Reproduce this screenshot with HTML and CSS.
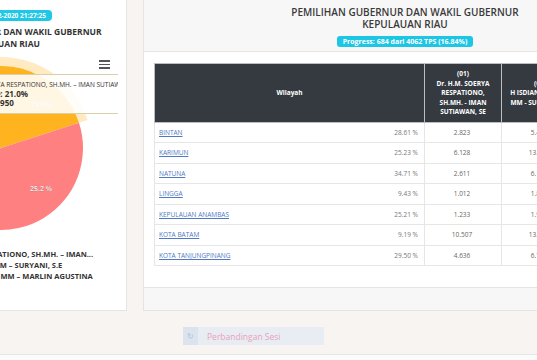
FILE: index.html
```html
<!DOCTYPE html>
<html lang="id">
<head>
    <meta charset="UTF-8">
    <title>Rekap Pilgub Kepri</title>
    <link rel="stylesheet" href="styles.css">
</head>
<body>
<div class="page">
    <div class="row">
        <!-- kartu grafik -->
        <div class="card card-chart">
            <div class="chart-head">
                <span class="badge">Update 10-12-2020 21:27:25</span>
                <div class="chart-title">PEMILIHAN GUBERNUR DAN WAKIL GUBERNUR<br>KEPULAUAN RIAU</div>
            </div>
            <div class="chart-box">
                <div class="menu-btn"><i></i><i></i><i></i></div>
                <svg class="pie" width="247" height="190" viewBox="0 0 247 190">
                    <path d="M122 96 L64.02 153.98 A82 82 0 0 1 81 24.99 Z" fill="#7cb5ec"/>
                    <path d="M76.5 17.19 A91 91 0 0 1 208.55 67.88 L199.99 70.66 A82 82 0 0 0 81 24.99 Z" fill="#ffb41f" opacity="0.28"/>
                    <path d="M122 96 L81 24.99 A82 82 0 0 1 199.99 70.66 Z" fill="#ffb41f"/>
                    <path d="M122 96 L199.99 70.66 A82 82 0 0 1 64.02 153.98 Z" fill="#ff8080"/>
                    <text x="152" y="55" class="pie-label">21.0 %</text>
                    <text x="151" y="139" class="pie-label">25.2 %</text>
                </svg>
                <div class="tooltip">
                    <div class="tip-name">Dr. H.M. SOERYA RESPATIONO, SH.MH. – IMAN SUTIAWAN, SE</div>
                    <div class="tip-val">Persentase: 21.0%</div>
                    <div class="tip-val">Jumlah: 12.950</div>
                </div>
            </div>
            <ul class="legend">
                <li><span class="dot dot-1"></span>Dr.H.M. SOERYA RESPATIONO, SH.MH. – IMAN...</li>
                <li><span class="dot dot-2"></span>H. ISDIANTO, S.SOS, MM – SURYANI, S.E</li>
                <li><span class="dot dot-3"></span>H. ANSAR AHMAD, SE, MM – MARLIN AGUSTINA</li>
            </ul>
        </div>

        <!-- kartu tabel -->
        <div class="card card-table">
            <div class="card-header">
                <div class="title">PEMILIHAN GUBERNUR DAN WAKIL GUBERNUR<br>KEPULAUAN RIAU</div>
                <span class="progress">Progress: 684 dari 4062 TPS (16.84%)</span>
            </div>
            <div class="card-body">
                <table class="rekap">
                    <colgroup>
                        <col class="c-wil"><col class="c-num"><col class="c-num"><col class="c-num">
                    </colgroup>
                    <thead>
                        <tr>
                            <th>Wilayah</th>
                            <th>(01)<br>Dr. H.M. SOERYA<br>RESPATIONO,<br>SH.MH. - IMAN<br>SUTIAWAN, SE</th>
                            <th>(02)<br>H ISDIANTO, S.Sos,<br>MM - SURYANI, S.E</th>
                            <th>(03)<br>H. ANSAR AHMAD,<br>SE, MM - MARLIN<br>AGUSTINA</th>
                        </tr>
                    </thead>
                    <tbody>
                        <tr><td><a href="#">BINTAN</a><span class="pct">28.61 %</span></td><td>2.823</td><td>5.412</td><td>1.630</td></tr>
                        <tr><td><a href="#">KARIMUN</a><span class="pct">25.23 %</span></td><td>6.128</td><td>13.021</td><td>5.140</td></tr>
                        <tr><td><a href="#">NATUNA</a><span class="pct">34.71 %</span></td><td>2.611</td><td>6.105</td><td>1.302</td></tr>
                        <tr><td><a href="#">LINGGA</a><span class="pct">9.43 %</span></td><td>1.012</td><td>1.844</td><td>2.210</td></tr>
                        <tr><td><a href="#">KEPULAUAN ANAMBAS</a><span class="pct">25.21 %</span></td><td>1.233</td><td>1.902</td><td>1.077</td></tr>
                        <tr><td><a href="#">KOTA BATAM</a><span class="pct">9.19 %</span></td><td>10.507</td><td>13.388</td><td>12.470</td></tr>
                        <tr><td><a href="#">KOTA TANJUNGPINANG</a><span class="pct">29.50 %</span></td><td>4.636</td><td>6.750</td><td>3.015</td></tr>
                    </tbody>
                </table>
            </div>
            <div class="card-footer"></div>
        </div>
    </div>

    <div class="actions">
        <span class="btn"><span class="btn-icon">&#8635;</span>Perbandingan Sesi</span>
    </div>
    <div class="site-footer"></div>
</div>
</body>
</html>
```

FILE: styles.css
```css
*{
    padding: 0;
    margin: 0;
    box-sizing: border-box;
}
body{
    background-color: #f8f4f1;
    font-family: "Open Sans", "Noto Sans", sans-serif;
    color: #333;
    overflow: hidden;
}
.page{
    width: 537px;
    height: 360px;
    overflow: hidden;
    display: flex;
    flex-direction: column;
}
.row{
    display: flex;
    gap: 16px;
    margin-left: -122px;   /*halaman tergeser ke kanan*/
    margin-top: -3px;
}
.card{
    background-color: #fff;
    border: 1px solid #e6e3e1;
    flex-shrink: 0;
}

/* kartu grafik */
.card-chart{
    width: 249px;
}
.chart-head{
    text-align: center;
    padding-top: 12px;
}
.badge{
    display: table;
    margin: 0 auto;
    background-color: #1ec8e6;
    color: #fff;
    font-size: 6.5px;
    font-weight: 700;
    line-height: 11px;
    padding: 0 6px;
    border-radius: 4px;
}
.chart-title{
    margin-top: 5px;
    font-size: 8.5px;
    font-weight: 700;
    line-height: 12px;
}
.chart-box{
    position: relative;
    height: 190px;
    margin-top: 2px;
}
.pie{
    display: block;
}
.pie-label{
    font-family: "Open Sans", sans-serif;
    font-size: 7px;
    font-weight: 700;
    fill: #fff;
    stroke: rgba(0,0,0,0.25);
    stroke-width: 0.4px;
}
.menu-btn{
    position: absolute;
    top: 8px;
    right: 16px;
    width: 11px;
    display: flex;
    flex-direction: column;
    gap: 2px;
}
.menu-btn i{
    display: block;
    height: 1.5px;
    background-color: #555;
}
.tooltip{
    position: absolute;
    left: 63px;
    top: 22px;
    width: 176px;
    height: 40px;
    padding: 5px 8px 5px 13px;
    background-color: rgba(255,255,255,0.88);
    border: 1px solid #d9cfa8;
    border-right: 0;
    overflow: hidden;
    white-space: nowrap;
}
.tip-name{
    margin-left: -2px;
    font-size: 6.5px;
    line-height: 10px;
    color: #333;
}
.tip-val{
    font-size: 8px;
    font-weight: 700;
    line-height: 8.5px;
}
.legend{
    list-style: none;
    margin-top: 7px;
    padding-left: 27px;
}
.legend li{
    display: flex;
    align-items: center;
    font-size: 7.5px;
    font-weight: 700;
    line-height: 11px;
    white-space: nowrap;
}
.dot{
    width: 7px;
    height: 7px;
    border-radius: 50%;
    margin-right: 5px;
}
.dot-1{ background-color: #ffb41f; }
.dot-2{ background-color: #ff8080; }
.dot-3{ background-color: #7cb5ec; }

/* kartu tabel */
.card-table{
    width: 524px;
}
.card-header{
    background-color: #f7f7f7;
    border-bottom: 1px solid #e6e3e1;
    text-align: center;
    padding: 8px 0 4px;
}
.card-header .title{
    font-size: 10px;
    font-weight: 600;
    line-height: 12px;
    color: #3a3a3a;
}
.progress{
    display: table;
    margin: 6px auto 0;
    background-color: #1cc6e4;
    color: #fff;
    font-size: 7px;
    font-weight: 700;
    line-height: 11px;
    padding: 0 5.5px;
    border-radius: 3px;
}
.card-body{
    padding: 11px 10px 21px;
}
.rekap{
    width: 501px;
    table-layout: fixed;
    border-collapse: collapse;
}
.c-wil{ width: 270px; }
.c-num{ width: 77px; }
.rekap th{
    background-color: #343a40;
    color: #fff;
    font-size: 6.5px;
    font-weight: 700;
    line-height: 9.6px;
    padding: 5px 2px;
    border: 1px solid #b9bec3;
    text-align: center;
    white-space: nowrap;
}
.rekap td{
    font-size: 6.5px;
    line-height: 9.5px;
    padding: 5px 6px 5px 4px;
    border: 1px solid #e6e6e6;
    text-align: center;
    color: #666;
    white-space: nowrap;
}
.rekap td:first-child{
    text-align: left;
}
.rekap a{
    color: #4f79c4;
}
.pct{
    float: right;
    color: #777;
}
.card-footer{
    background-color: #f7f7f7;
    border-top: 1px solid #e6e3e1;
    height: 23px;
}

/* tombol bawah */
.actions{
    display: flex;
    padding-left: 183px;
    margin-top: 16px;
}
.btn{
    display: flex;
    align-items: center;
    width: 141px;
    height: 18px;
    background-color: #e8edf4;
    color: #eaa2b8;
    font-size: 8.5px;
}
.btn-icon{
    width: 15px;
    height: 18px;
    margin-right: 9px;
    background-color: #dbe3ee;
    color: #b7c3d3;
    font-size: 8px;
    text-align: center;
    line-height: 18px;
}
.site-footer{
    margin-top: auto;
    height: 6px;
    border-top: 1px solid #e8e6e4;
    background-color: #fbfbfb;
}
```
